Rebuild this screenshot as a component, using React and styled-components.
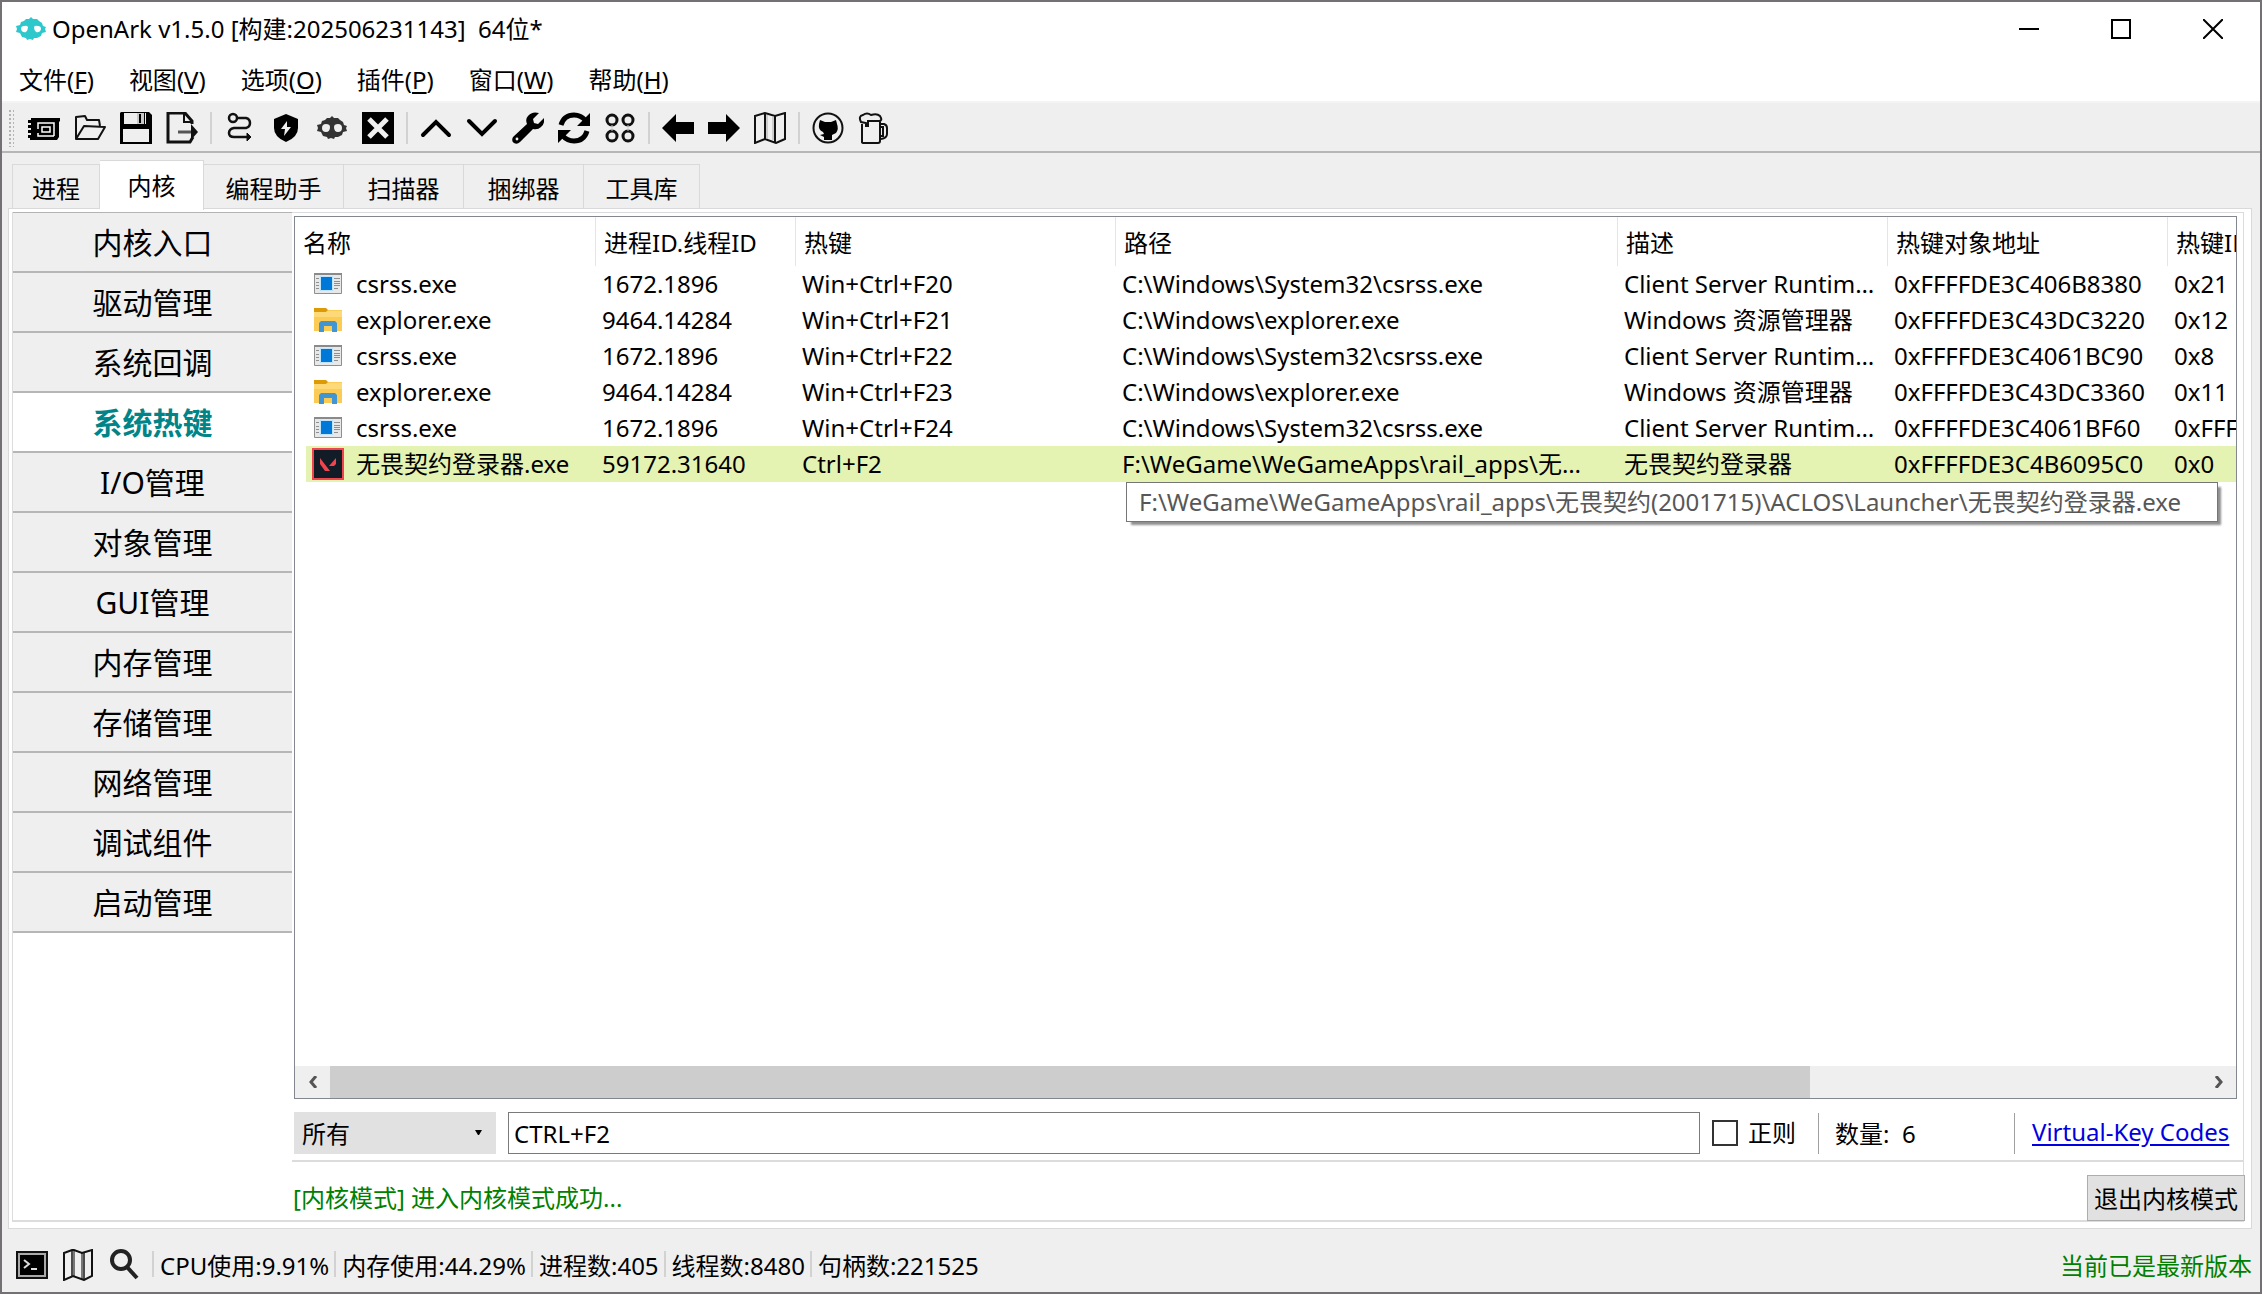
import React, { useState } from "react";
import styled, { createGlobalStyle, css } from "styled-components";

const Global = createGlobalStyle`
  *, *::before, *::after { box-sizing: border-box; }
  body { margin: 0; }
  body, button, input, select, table {
    font-family: "Noto Sans", "Noto Sans CJK SC", sans-serif;
    font-size: 24px;
    line-height: 32px;
    color: #000;
  }
`;

const Window = styled.div`
  min-height: 100vh;
  display: flex;
  flex-direction: column;
  border: 2px solid #737173;
  background: #efefef;
`;

/* ---------- title bar ---------- */
const TitleBar = styled.header`
  display: flex;
  align-items: center;
  height: 54px;
  padding: 0 1px 0 13px;
  background: #fff;
`;
const Title = styled.h1`
  flex: 1;
  margin: 0 0 0 5px;
  font-size: 24px;
  font-weight: 400;
  white-space: pre;
`;
const WindowButton = styled.button`
  width: 92px;
  height: 54px;
  padding: 0;
  border: 0;
  background: transparent;
  display: grid;
  place-items: center;
`;

/* ---------- menu ---------- */
const MenuBar = styled.nav`
  display: flex;
  align-items: center;
  gap: 35px;
  height: 47px;
  padding: 2px 17px 0;
  background: #fff;
  border-bottom: 2px solid #f4f4f4;
`;
const MenuButton = styled.button`
  padding: 0;
  border: 0;
  background: transparent;
  white-space: nowrap;
  u { text-underline-offset: 3px; }
`;

/* ---------- tool bar ---------- */
const ToolBar = styled.div`
  display: flex;
  align-items: center;
  height: 50px;
  padding: 2px 0 0 6px;
  border-bottom: 2px solid #b6b6b6;
`;
const Grip = styled.span`
  width: 6px;
  height: 38px;
  margin-right: 7px;
  background-image: radial-gradient(circle, #b4b4b4 1px, transparent 1px);
  background-size: 4px 4px;
`;
const ToolButton = styled.button`
  width: 46px;
  height: 46px;
  padding: 0;
  border: 0;
  background: transparent;
  display: grid;
  place-items: center;
`;
const Divider = styled.span`
  width: 2px;
  height: 32px;
  margin: 0 5px;
  background: #d2d2d2;
`;

/* ---------- top tabs ---------- */
const TabStrip = styled.div`
  display: flex;
  align-items: flex-end;
  height: 55px;
  padding-left: 10px;
`;
const Tab = styled.button`
  width: ${(p) => p.$width}px;
  height: 44px;
  padding: 4px 0 0;
  border: 1px solid #d9d9d9;
  border-left-width: ${(p) => (p.$first ? 1 : 0)}px;
  border-bottom: 0;
  background: #efefef;
  white-space: nowrap;
  ${(p) =>
    p.$active &&
    css`
      height: 50px;
      padding-top: 0;
      margin-bottom: -2px;
      background: #fff;
      z-index: 1;
    `}
`;
const Pane = styled.main`
  flex: 1;
  display: flex;
  margin: 0 8px 0 6px;
  padding: 3px 7px 6px 3px;
  border: 1px solid #d9d9d9;
  background: #fff;
`;
const PaneInner = styled.div`
  flex: 1;
  min-width: 0;
  display: flex;
  border-left: 1px solid #dcdcdc;
  border-right: 1px solid #dcdcdc;
  border-bottom: 2px solid #dcdcdc;
`;

/* ---------- side tabs ---------- */
const SideBar = styled.nav`
  flex: none;
  width: 279px;
  border-top: 1px solid #b4b4b4;
`;
const SideTab = styled.button`
  display: block;
  width: 100%;
  height: 60px;
  padding: 2px 0 0;
  border: 0;
  border-bottom: 2px solid #b6b6b6;
  background: ${(p) => (p.$active ? "#fff" : "#efefef")};
  color: ${(p) => (p.$active ? "#008487" : "#000")};
  font-size: 30px;
  font-weight: ${(p) => (p.$active ? 700 : 400)};
`;

/* ---------- content ---------- */
const Content = styled.section`
  flex: 1;
  min-width: 0;
  display: flex;
  flex-direction: column;
`;
const Group = styled.div`
  flex: 1;
  display: flex;
  flex-direction: column;
  gap: 13px;
  padding: 3px 6px 6px 2px;
  border-top: 1px solid #dcdcdc;
  border-bottom: 2px solid #dcdcdc;
`;
const ListFrame = styled.div`
  flex: 1;
  display: flex;
  flex-direction: column;
  overflow: hidden;
  border: 1px solid #828790;
`;
const ListView = styled.div`
  flex: 1;
  overflow: hidden;
`;
const Table = styled.table`
  width: 2200px;
  table-layout: fixed;
  border-collapse: separate;
  border-spacing: 0;
`;
const HeadCell = styled.th`
  height: 49px;
  padding: 2px 7px 0 8px;
  border-right: 1px solid #e5e5e5;
  font-weight: 400;
  text-align: left;
  white-space: nowrap;
`;
const Cell = styled.td`
  position: relative;
  height: 36px;
  padding: 0 ${(p) => (p.$path ? 20 : 7)}px 0 6px;
  background: ${(p) => (p.$hot ? "#e4f2b2" : "transparent")};
`;
const NameCell = styled.td`
  height: 36px;
  padding: 0 0 0 11px;
`;
const Name = styled.div`
  display: flex;
  align-items: center;
  gap: 12px;
  height: 36px;
  padding-left: 6px;
  background: ${(p) => (p.$hot ? "#e4f2b2" : "transparent")};
  white-space: nowrap;
`;
const Clip = styled.div`
  overflow: hidden;
  text-overflow: ellipsis;
  white-space: nowrap;
`;
const Tooltip = styled.div`
  position: absolute;
  top: 36px;
  left: 10px;
  z-index: 2;
  min-width: 1092px;
  height: 40px;
  padding: 3px 12px 0;
  border: 1px solid #767676;
  background: #fff;
  box-shadow: 4px 4px 2px -1px #8f8f8f;
  color: #575757;
  white-space: nowrap;
`;

const ScrollBar = styled.div`
  display: flex;
  height: 32px;
  background: #efefef;
`;
const ScrollButton = styled.button`
  width: 35px;
  padding: 0;
  border: 0;
  background: transparent;
  display: grid;
  place-items: center;
`;
const ScrollTrack = styled.div`
  flex: 1;
`;
const ScrollThumb = styled.div`
  width: 79.1%;
  height: 100%;
  background: #cdcdcd;
`;

/* ---------- filter row ---------- */
const FilterRow = styled.div`
  display: flex;
  align-items: center;
  height: 42px;
`;
const SelectBox = styled.div`
  position: relative;
  width: 202px;
  margin-right: 12px;
  svg {
    position: absolute;
    right: 14px;
    top: 18px;
    pointer-events: none;
  }
`;
const Select = styled.select`
  appearance: none;
  display: block;
  width: 100%;
  height: 42px;
  padding: 2px 8px 0;
  border: 0;
  border-radius: 0;
  background: #e1e1e1;
`;
const FilterInput = styled.input`
  flex: 1;
  min-width: 0;
  height: 42px;
  padding: 0 5px;
  border: 1px solid #7a7a7a;
  background: #fff;
`;
const CheckLabel = styled.label`
  display: flex;
  align-items: center;
  gap: 10px;
  margin-left: 12px;
  width: 106px;
  white-space: nowrap;
`;
const CheckBox = styled.input`
  appearance: none;
  width: 26px;
  height: 26px;
  margin: 0;
  border: 2px solid #333;
  background: #fff;
`;
const Count = styled.div`
  width: 196px;
  height: 41px;
  padding: 5px 0 0 16px;
  border-left: 1px solid #a0a0a0;
  white-space: pre;
`;
const LinkBox = styled.div`
  width: 223px;
  height: 41px;
  padding: 3px 0 0 17px;
  border-left: 1px solid #a0a0a0;
`;
const Link = styled.a`
  color: #0000e0;
  text-underline-offset: 3px;
  white-space: nowrap;
`;

const MessageRow = styled.div`
  display: flex;
  align-items: center;
  justify-content: space-between;
  height: 58px;
  padding: 13px 0 0 1px;
  margin-right: -1px;
`;
const Message = styled.span`
  color: #008000;
`;
const PushButton = styled.button`
  height: 46px;
  margin-right: -1px;
  padding: 2px 6px 0;
  border: 1px solid #adadad;
  background: #e1e1e1;
  white-space: nowrap;
`;

/* ---------- status bar ---------- */
const StatusBar = styled.footer`
  display: flex;
  align-items: center;
  height: 63px;
  padding: 10px 8px 0 14px;
`;
const StatusIcons = styled.div`
  display: flex;
  align-items: center;
  gap: 14px;
  margin-right: 12px;
  margin-bottom: 2px;
`;
const StatusItem = styled.span`
  padding: 0 5px 0 6px;
  white-space: nowrap;
`;
const Version = styled.span`
  margin-left: auto;
  color: #008000;
`;
const StatusDivider = styled.span`
  width: 2px;
  height: 26px;
  margin-bottom: 4px;
  background: #d2d2d2;
`;

/* ---------- icons ---------- */
const Svg = ({ children, size = 32, ...rest }) => (
  <svg width={size} height={size} viewBox="0 0 32 32" fill="none" stroke="#111" strokeWidth="2" aria-hidden="true" {...rest}>
    {children}
  </svg>
);

const skullBody =
  "M11 2l3 0 2-2 2 2 4 0 2 2 3 2 1 3 3 1-1 2 1 3-4 1-1 3-4 2-3 0-1 2-3-1-3 1-1-2-4-1-2-4-4-1 1-3-1-3 4-1 1-3 3-1z";

const Logo = () => (
  <svg width="32" height="24" viewBox="0 0 32 24" aria-hidden="true">
    <path fill="#2cc8cc" d={skullBody} />
    <path fill="#fff" d="M6 12q0-3 3-3 3-1 4 1 0 3-2 5-4 1-5-3zM26 12q0-3-3-3-3-1-4 1 0 3 2 5 4 1 5-3z" />
  </svg>
);
const SkullIcon = () => (
  <svg width="32" height="24" viewBox="0 0 32 24" aria-hidden="true">
    <path fill="#333" d={skullBody} />
    <path fill="#efefef" d="M6 12q0-4 4-4 4 0 4 3 0 5-4 5t-4-4zM26 12q0-4-4-4-4 0-4 3 0 5 4 5t4-4z" />
  </svg>
);

const MapIcon = () => (
  <Svg>
    <path d="M11 2v26M21 4v26" stroke="#777" strokeWidth="4" />
    <path d="M2 4l8-3 2 0 8 3 10-3v26l-8 4-11-4-9 4z" />
    <path d="M10 2v26M22 4v26" stroke="#222" strokeWidth="1" />
  </Svg>
);

const icons = {
  memory: (
    <Svg>
      <path fill="#000" stroke="none" d="M3 6h29v3l-1 1v15l-2 3H2v-2H0v-3h3v-2H0v-3h3v-2H0v-3h3v-2H0V8h3z" />
      <path stroke="#fff" strokeWidth="1.500" d="M26 24H10v-3M10 17v-6h16v13M14 15h8v5h-8z" />
    </Svg>
  ),
  open: (
    <Svg>
      <path d="M2 27V5l9-1 2 4h12l1 6M2 27l8-13 21 1-7 12z" strokeLinejoin="round" />
    </Svg>
  ),
  save: (
    <Svg>
      <path fill="#000" stroke="none" d="M1 0h28l3 3v29H0V1z" />
      <path fill="#efefef" stroke="none" d="M4 1h14v11H4zM25 1h1v11h-1zM3 17h26v13H3z" />
      <path fill="#c9c9c9" stroke="none" d="M17 1h7v11h-7z" />
      <path d="M20 2v9" stroke="#000" />
    </Svg>
  ),
  export: (
    <Svg strokeWidth="3">
      <path d="M26 12V9l-7-8H2v29h22l3-5" />
      <path d="M18 1v9h9" strokeWidth="2" />
      <path d="M12 20h15" stroke="#555" />
      <path fill="#111" stroke="none" d="M25 12l7 8-7 8z" />
    </Svg>
  ),
  route: (
    <Svg strokeWidth="2.500">
      <circle cx="9" cy="6" r="4" />
      <path d="M13 6h9q4 1 4 5t-4 5H10q-5 1-5 5t5 4h16" />
      <path fill="#111" d="M23 21l4 4-4 4z" strokeWidth="1" />
    </Svg>
  ),
  shield: (
    <Svg>
      <path fill="#000" stroke="none" d="M16 2l12 5v9q0 9-12 14Q4 25 4 16V7z" />
      <path fill="#efefef" stroke="none" d="M17 9l-6 8h4l-1 7 7-9h-4z" />
    </Svg>
  ),
  skull: <SkullIcon />,
  close: (
    <Svg>
      <path fill="#000" stroke="none" d="M0 0h32v32H0z" />
      <path d="M7 7l18 18M25 7L7 25" stroke="#efefef" strokeWidth="5" />
    </Svg>
  ),
  up: (
    <Svg>
      <path d="M3 23L16 10l13 13" strokeWidth="4" strokeLinecap="round" stroke="#000" />
    </Svg>
  ),
  down: (
    <Svg>
      <path d="M3 9l13 13L29 9" strokeWidth="4" strokeLinecap="round" stroke="#000" />
    </Svg>
  ),
  wrench: (
    <Svg>
      <path
        fill="#000"
        stroke="none"
        d="M27 1l-6 6 1 4 4 1 6-6q1 6-3 9-3 3-8 2L8 30q-3 3-6 1t-1-6L15 12q-2-5 1-8 4-5 11-3z"
      />
      <circle cx="5" cy="27" r="1.400" fill="#efefef" stroke="none" />
    </Svg>
  ),
  refresh: (
    <Svg>
      <path d="M3 13Q6 3 16 3q7 0 12 6M29 19q-3 10-13 10-7 0-12-6" strokeWidth="5" stroke="#000" />
      <path fill="#000" stroke="none" d="M32 1v13H19zM0 31V18h13z" />
    </Svg>
  ),
  grid: (
    <Svg strokeWidth="3">
      <circle cx="8" cy="8" r="5" />
      <circle cx="24" cy="8" r="5" />
      <circle cx="8" cy="24" r="5" />
      <circle cx="24" cy="24" r="5" />
      <path d="M8 13v6M24 13v6" stroke="#ccc" strokeWidth="1" />
    </Svg>
  ),
  back: (
    <Svg>
      <path fill="#000" stroke="none" d="M0 16L14 2v8h18v12H14v8z" />
    </Svg>
  ),
  forward: (
    <Svg>
      <path fill="#000" stroke="none" d="M32 16L18 2v8H0v12h18v8z" />
    </Svg>
  ),
  map: (
    <Svg>
      <path d="M1 4l10-3 10 3 10-3v26l-9 4-11-4-10 4z" />
      <path d="M11 1v26M21 4v26" />
      <path d="M13 3v24M19 4v24" stroke="#aaa" strokeWidth="1" />
    </Svg>
  ),
  github: (
    <Svg>
      <circle cx="16" cy="16" r="14.500" />
      <path
        fill="#000"
        stroke="none"
        d="M8 8l5 2h6l5-2 1 4q2 5-1 9l-4 2v5h-8v-3l-4-2 4-1-1-2q-5-2-4-8z"
      />
    </Svg>
  ),
  beer: (
    <Svg>
      <path d="M4 12v18q0 1 2 1h14q2 0 2-2V8M3 10Q0 4 5 3q4-3 8 0 6-2 9 1 3 5-1 5H10v5H8v-3z" />
      <path d="M23 12h3q3 1 3 4v6q0 4-6 5M23 15h2v9h-2" />
    </Svg>
  ),
};

const TerminalIcon = () => (
  <Svg>
    <path fill="#a9a9a9" d="M1 3h30v26H1z" />
    <path fill="#000" stroke="none" d="M4 6h24v20H4z" />
    <path d="M8 11l5 4-5 4M15 20h6" stroke="#ddd" />
  </Svg>
);
const SearchIcon = () => (
  <Svg>
    <circle cx="13" cy="11" r="9" strokeWidth="4" stroke="#222" />
    <path d="M19 18l10 11" strokeWidth="4" stroke="#222" />
  </Svg>
);

const AppIcon = () => (
  <svg width="32" height="32" viewBox="0 0 32 32" aria-hidden="true">
    <path fill="#e8e8e8" stroke="#8f8f8f" strokeWidth="1" d="M2.500 5.500h27v20h-27z" />
    <path fill="#8a8a8a" d="M2 5h28v2H2z" />
    <path fill="#0078d7" stroke="#bfe4fb" strokeWidth="1" d="M8.500 8.500h12v14h-12z" />
    <path stroke="#8f8f8f" d="M4 10.500h3M4 14.500h3M4 17.500h3M4 20.500h3M22 10.500h6M22 13.500h6M22 15.500h6M22 17.500h6M22 20.500h4" />
  </svg>
);
const FolderIcon = () => (
  <svg width="32" height="32" viewBox="0 0 32 32" aria-hidden="true">
    <path fill="#fccb54" d="M2 6h28v21H2z" />
    <path fill="#fed978" d="M2 7h28v6H2z" />
    <path fill="#dc9a06" d="M2 4h12l2 2-2 2H2z" />
    <path fill="#4095d2" d="M9 17h14l2 2v9h-5v-6h-8v6H7v-9z" />
  </svg>
);
const ValorantIcon = () => (
  <svg width="32" height="32" viewBox="0 0 32 32" aria-hidden="true">
    <path fill="#111c26" stroke="#f0444e" strokeWidth="2" d="M1 1h30v30H1z" />
    <path fill="#f0444e" d="M8 10l10 13h-5l-5-7zM24 10v6l-2 2h-5z" />
  </svg>
);
const rowIcons = { app: <AppIcon />, folder: <FolderIcon />, game: <ValorantIcon /> };

/* ---------- data ---------- */
const menus = [
  ["文件", "F"],
  ["视图", "V"],
  ["选项", "O"],
  ["插件", "P"],
  ["窗口", "W"],
  ["帮助", "H"],
];
const tools = [
  ["memory", "open", "save", "export"],
  ["route", "shield", "skull", "close"],
  ["up", "down", "wrench", "refresh", "grid"],
  ["back", "forward", "map"],
  ["github", "beer"],
];
const tabs = [
  ["进程", 88],
  ["内核", 104],
  ["编程助手", 140],
  ["扫描器", 120],
  ["捆绑器", 120],
  ["工具库", 116],
];
const sideTabs = [
  "内核入口",
  "驱动管理",
  "系统回调",
  "系统热键",
  "I/O管理",
  "对象管理",
  "GUI管理",
  "内存管理",
  "存储管理",
  "网络管理",
  "调试组件",
  "启动管理",
];
const columns = [
  ["名称", 301],
  ["进程ID.线程ID", 200],
  ["热键", 320],
  ["路径", 502],
  ["描述", 270],
  ["热键对象地址", 280],
  ["热键ID", 327],
];
const csrss = "C:\\Windows\\System32\\csrss.exe";
const explorer = "C:\\Windows\\explorer.exe";
const game = "F:\\WeGame\\WeGameApps\\rail_apps\\无畏契约(2001715)\\ACLOS\\Launcher\\无畏契约登录器.exe";
const rows = [
  ["app", "csrss.exe", "1672.1896", "Win+Ctrl+F20", csrss, "Client Server Runtime Process", "0xFFFFDE3C406B8380", "0x21"],
  ["folder", "explorer.exe", "9464.14284", "Win+Ctrl+F21", explorer, "Windows 资源管理器", "0xFFFFDE3C43DC3220", "0x12"],
  ["app", "csrss.exe", "1672.1896", "Win+Ctrl+F22", csrss, "Client Server Runtime Process", "0xFFFFDE3C4061BC90", "0x8"],
  ["folder", "explorer.exe", "9464.14284", "Win+Ctrl+F23", explorer, "Windows 资源管理器", "0xFFFFDE3C43DC3360", "0x11"],
  ["app", "csrss.exe", "1672.1896", "Win+Ctrl+F24", csrss, "Client Server Runtime Process", "0xFFFFDE3C4061BF60", "0xFFFFFFF"],
  ["game", "无畏契约登录器.exe", "59172.31640", "Ctrl+F2", game, "无畏契约登录器", "0xFFFFDE3C4B6095C0", "0x0"],
];
const stats = ["CPU使用:9.91%", "内存使用:44.29%", "进程数:405", "线程数:8480", "句柄数:221525"];

export default function App() {
  const [tab, setTab] = useState("内核");
  const [side, setSide] = useState("系统热键");
  const [filter, setFilter] = useState("CTRL+F2");

  return (
    <Window>
      <Global />
      <TitleBar>
        <Logo />
        <Title>{"OpenArk v1.5.0 [构建:202506231143]  64位*"}</Title>
        <WindowButton aria-label="最小化">
          <svg width="20" height="20"><path d="M0 10h20" stroke="#000" strokeWidth="2" /></svg>
        </WindowButton>
        <WindowButton aria-label="最大化">
          <svg width="20" height="20"><path d="M1 1h18v18H1z" fill="none" stroke="#000" strokeWidth="2" /></svg>
        </WindowButton>
        <WindowButton aria-label="关闭">
          <svg width="20" height="20"><path d="M0 0l20 20M20 0L0 20" stroke="#000" strokeWidth="2" /></svg>
        </WindowButton>
      </TitleBar>

      <MenuBar>
        {menus.map(([label, key]) => (
          <MenuButton key={key}>
            {label}(<u>{key}</u>)
          </MenuButton>
        ))}
      </MenuBar>

      <ToolBar>
        <Grip />
        {tools.map((group, i) => (
          <React.Fragment key={group[0]}>
            {i > 0 && <Divider />}
            {group.map((name) => (
              <ToolButton key={name} aria-label={name}>
                {icons[name]}
              </ToolButton>
            ))}
          </React.Fragment>
        ))}
      </ToolBar>

      <TabStrip role="tablist">
        {tabs.map(([name, width], i) => (
          <Tab key={name} role="tab" $first={i === 0} $width={width} $active={tab === name} onClick={() => setTab(name)}>
            {name}
          </Tab>
        ))}
      </TabStrip>

      <Pane>
        <PaneInner>
          <SideBar>
            {sideTabs.map((name) => (
              <SideTab key={name} $active={side === name} onClick={() => setSide(name)}>
                {name}
              </SideTab>
            ))}
          </SideBar>
          <Content>
            <Group>
              <ListFrame>
                <ListView>
                  <Table>
                    <colgroup>
                      {columns.map(([name, width]) => (
                        <col key={name} width={width} />
                      ))}
                    </colgroup>
                    <thead>
                      <tr>
                        {columns.map(([name]) => (
                          <HeadCell key={name}>{name}</HeadCell>
                        ))}
                      </tr>
                    </thead>
                    <tbody>
                      {rows.map(([icon, name, ...cells], r) => {
                        const hot = icon === "game";
                        return (
                          <tr key={r}>
                            <NameCell>
                              <Name $hot={hot}>
                                {rowIcons[icon]}
                                {name}
                              </Name>
                            </NameCell>
                            {cells.map((text, c) => (
                              <Cell key={c} $hot={hot} $path={c === 2}>
                                <Clip>{text}</Clip>
                                {hot && c === 2 && <Tooltip role="tooltip">{text}</Tooltip>}
                              </Cell>
                            ))}
                          </tr>
                        );
                      })}
                    </tbody>
                  </Table>
                </ListView>
                <ScrollBar>
                  <ScrollButton aria-label="向左">
                    <svg width="10" height="12"><path d="M8 0L3 6l5 6" fill="none" stroke="#555" strokeWidth="3" /></svg>
                  </ScrollButton>
                  <ScrollTrack>
                    <ScrollThumb />
                  </ScrollTrack>
                  <ScrollButton aria-label="向右">
                    <svg width="10" height="12"><path d="M2 0l5 6-5 6" fill="none" stroke="#555" strokeWidth="3" /></svg>
                  </ScrollButton>
                </ScrollBar>
              </ListFrame>
              <FilterRow>
                <SelectBox>
                  <Select aria-label="筛选范围">
                    <option>所有</option>
                  </Select>
                  <svg width="7" height="5"><path d="M0 0h7L4 5H3z" fill="#000" /></svg>
                </SelectBox>
                <FilterInput aria-label="筛选" value={filter} onChange={(e) => setFilter(e.target.value)} />
                <CheckLabel>
                  <CheckBox type="checkbox" />
                  正则
                </CheckLabel>
                <Count>{"数量:  6"}</Count>
                <LinkBox>
                  <Link href="#virtual-key-codes">Virtual-Key Codes</Link>
                </LinkBox>
              </FilterRow>
            </Group>
            <MessageRow>
              <Message>[内核模式] 进入内核模式成功...</Message>
              <PushButton>退出内核模式</PushButton>
            </MessageRow>
          </Content>
        </PaneInner>
      </Pane>

      <StatusBar>
        <StatusIcons>
          <TerminalIcon />
          <MapIcon />
          <SearchIcon />
        </StatusIcons>
        {stats.map((text) => (
          <React.Fragment key={text}>
            <StatusDivider />
            <StatusItem>{text}</StatusItem>
          </React.Fragment>
        ))}
        <Version>当前已是最新版本</Version>
      </StatusBar>
    </Window>
  );
}
